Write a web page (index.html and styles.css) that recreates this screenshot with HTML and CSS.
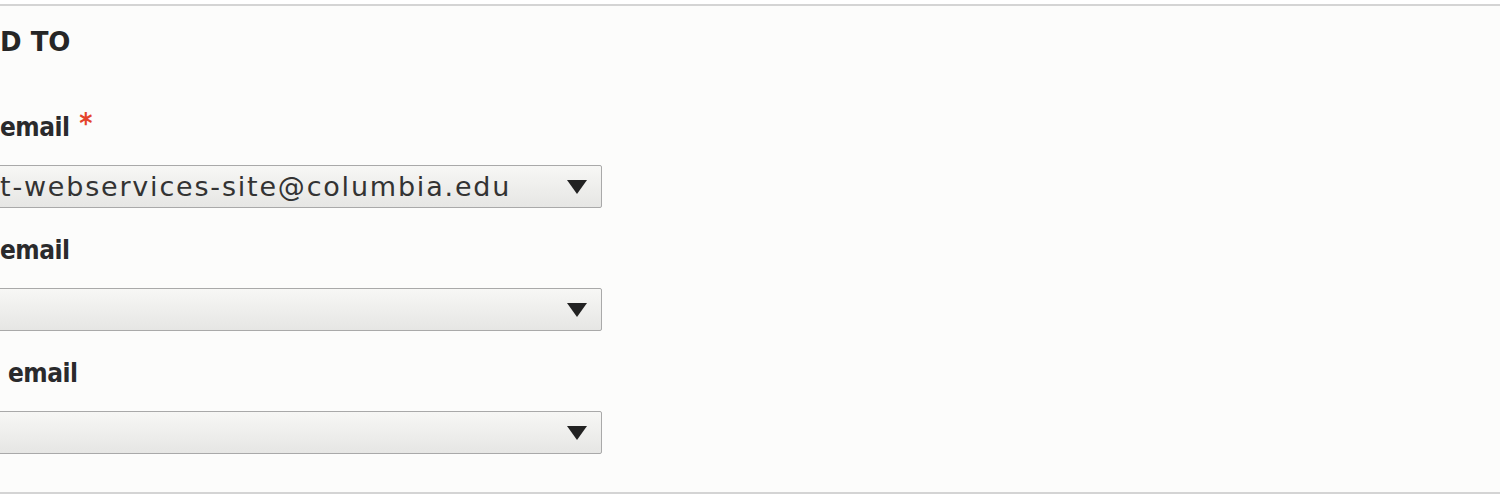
FILE: index.html
```html
<!DOCTYPE html>
<html lang="en">
<head>
<meta charset="utf-8">
<title>Send to</title>
<link rel="stylesheet" href="styles.css">
</head>
<body>
<fieldset class="panel">
  <div class="inner">
    <div class="legend">D TO</div>
    <div class="field">
      <label class="label">email <span class="req">*</span></label>
      <div class="select"><span class="value">t-webservices-site@columbia.edu</span><svg class="arrow" width="20" height="14" viewBox="0 0 20 14"><path d="M0 0H20L10 14Z" fill="#222"/></svg></div>
    </div>
    <div class="field">
      <label class="label">email</label>
      <div class="select"><span class="value"></span><svg class="arrow" width="20" height="14" viewBox="0 0 20 14"><path d="M0 0H20L10 14Z" fill="#222"/></svg></div>
    </div>
    <div class="field">
      <label class="label label-indent">email</label>
      <div class="select"><span class="value"></span><svg class="arrow" width="20" height="14" viewBox="0 0 20 14"><path d="M0 0H20L10 14Z" fill="#222"/></svg></div>
    </div>
  </div>
</fieldset>
</body>
</html>
```
FILE: styles.css
```css
html, body {
  margin: 0;
  padding: 0;
  background: #ffffff;
}
body {
  font-family: "DejaVu Sans", "Liberation Sans", sans-serif;
  color: #333;
}
.panel {
  margin: 4px 0 0 0;
  padding: 0;
  height: 486px;
  box-sizing: content-box;
  border: 0;
  border-top: 2px solid #d4d4d4;
  border-bottom: 2px solid #d4d4d4;
  background: #fcfcfb;
  overflow: hidden;
  min-width: 0;
}
.inner {
  margin-left: -10px;
  padding-top: 21px;
}
.legend {
  padding-left: 10px;
  font-size: 26px;
  line-height: 30px;
  font-weight: bold;
  color: #262626;
  margin-bottom: 55px;
}
.field {
  margin-bottom: 27px;
}
.label {
  display: block;
  padding-left: 10px;
  font-family: "DejaVu Sans Condensed", "DejaVu Sans", sans-serif;
  font-stretch: semi-condensed;
  font-size: 26px;
  line-height: 30px;
  font-weight: bold;
  letter-spacing: -0.5px;
  color: #2a2a2c;
  margin-bottom: 23px;
}
.label-indent {
  padding-left: 18px;
}
.req {
  color: #e4432c;
  font-size: 28px;
  line-height: 0;
  vertical-align: 3px;
  margin-left: 2px;
}
.select {
  display: flex;
  align-items: center;
  justify-content: space-between;
  box-sizing: border-box;
  width: 612px;
  height: 43px;
  padding: 0 14px 0 9px;
  border: 1px solid #a9a9a9;
  border-radius: 2px;
  background: linear-gradient(#f7f7f5, #e6e6e4);
  font-size: 27px;
  letter-spacing: 1.8px;
  color: #333;
}
.value {
  white-space: nowrap;
}
.arrow {
  flex: none;
}
```
